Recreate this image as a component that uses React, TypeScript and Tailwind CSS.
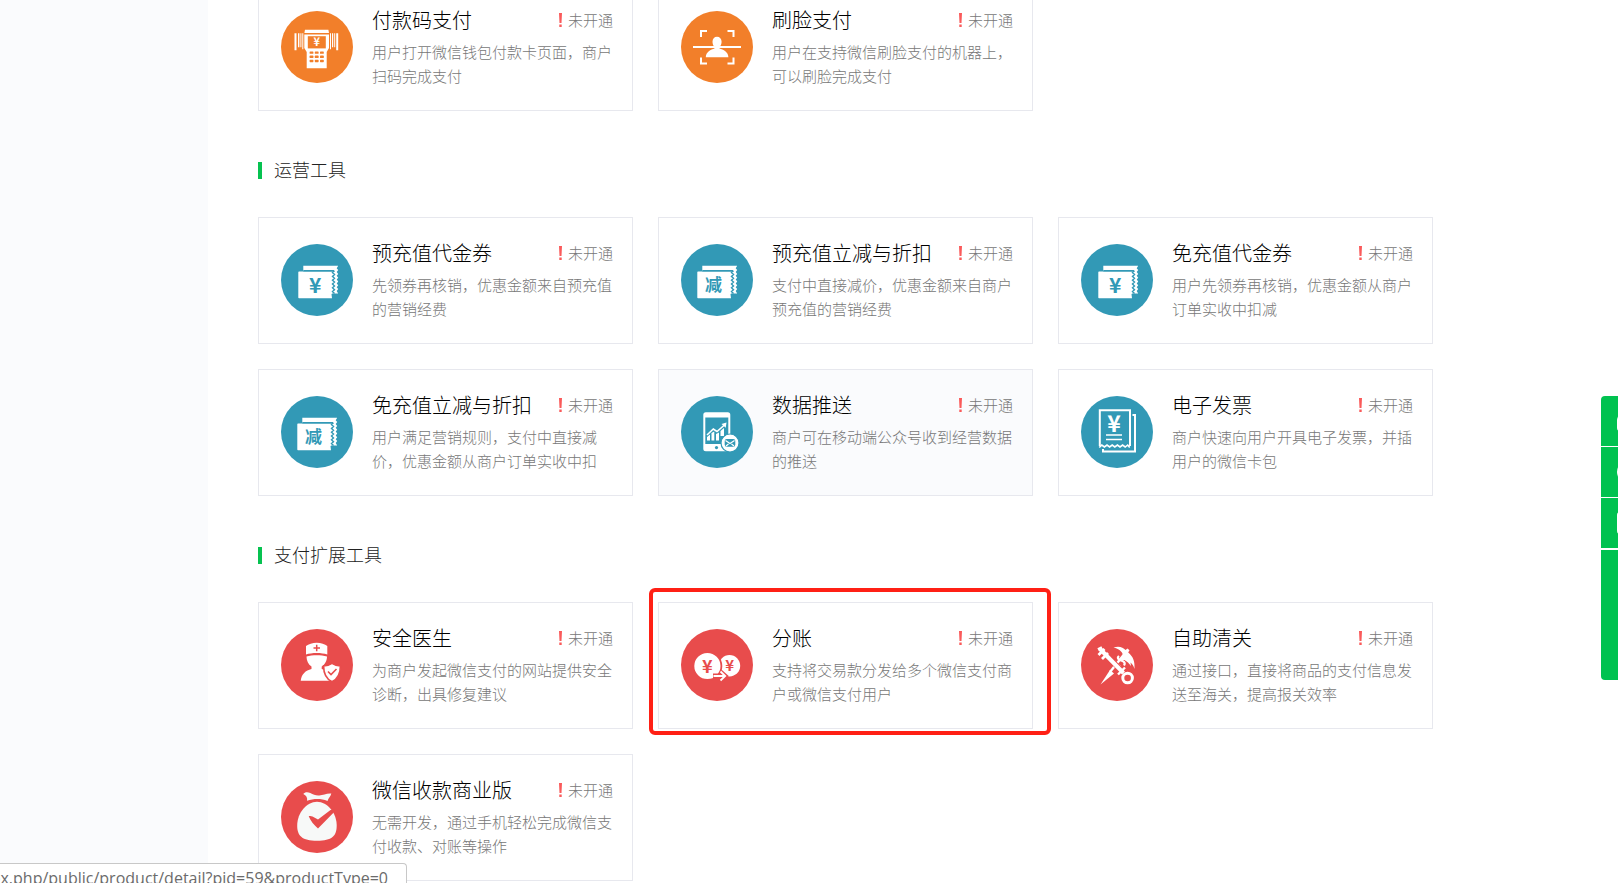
import React from 'react';
import { FiHeadphones, FiHelpCircle, FiFileText } from 'react-icons/fi';

type IconProps = { color: string };

const zigzag = (x: number, top: number, count: number) =>
  `M${x} ${top}` + ' l-2 1.9 l2 1.9'.repeat(count);

const PosIcon: React.FC<IconProps> = ({ color }) => (
  <>
    <g fill="#fff">
      <path d="M24 18.7h23.4l.6 3.3H23.4z" />
      <path d="M23.3 23.4H48V37l-2.3 4v16.2H25.7V41l-2.4-4z" />
      <path d="M13.5 22.3h2v17h-2zM17 22.3h1.4v14H17zM19.4 22.3h1v14h-1zM21.3 22.3h1v16h-1z" />
      <path d="M49 22.3h1v16h-1zM51 22.3h1.2v14H51zM53.2 22.3h1v14h-1zM55.2 22.3h2v17h-2z" />
    </g>
    <path fill={color} d="M26.8 25.2h18v12.2h-18z" />
    <text x="35.8" y="35.2" textAnchor="middle" fontSize="11" fontWeight="700" fill="#fff">¥</text>
    {[40.4, 44.6, 48.8].map((y) =>
      [28.6, 33.8, 39].map((x) => <rect key={`${x}-${y}`} x={x} y={y} width="3.8" height="2.4" rx=".6" fill={color} />)
    )}
  </>
);

const FaceIcon: React.FC<IconProps> = () => (
  <>
    <path
      fill="none"
      stroke="#fff"
      strokeWidth="2"
      d="M20 26v-6h6M46.5 20h6v6M20 46.5v6h6M46.5 52.5h6v-6M12 36h48"
    />
    <path fill="#fff" d="M36 25.8c-2.8 0-4.5 2-4.5 5 0 2.2.8 4.2 2 5.3v1.5c-3.5 1-8.7 3.6-8.7 8.7h22.6c0-5.1-5.2-7.7-8.9-8.7v-1.5c1.3-1.1 2.1-3.1 2.1-5.3 0-3-1.8-5-4.6-5z" />
  </>
);

const Coupon: React.FC<IconProps & { children: React.ReactNode }> = ({ color, children }) => (
  <>
    <path fill="#fff" d="M22.3 21.7h34.9l-1.5 2.5 1.5 1.9-1.5 1.9 1.5 1.9-1.5 1.9 1.5 1.9-1.5 1.9 1.5 1.9-1.5 1.9 1.5 1.9-1.5 1.9 1.5 1.9-1.5 1.9 1.5 2.5h-6V27H22.3z" />
    <path fill="#fff" d="M18 27.5h34v21l-1.5 1.8.5 4H18a.7.7 0 0 1-.7-.7V28.2a.7.7 0 0 1 .7-.7z" />
    <path fill="none" stroke={color} strokeWidth="1.4" d={`M22.3 26.7H53 ${zigzag(53.5, 26.7, 6)}`} />
    {children}
  </>
);

const YuanCouponIcon: React.FC<IconProps> = ({ color }) => (
  <Coupon color={color}>
    <text x="34.3" y="48.5" textAnchor="middle" fontSize="21" fontWeight="700" fill={color}>¥</text>
  </Coupon>
);

const DiscountCouponIcon: React.FC<IconProps> = ({ color }) => (
  <g transform="translate(-1 0)">
    <Coupon color={color}>
      <text x="33.5" y="47" textAnchor="middle" fontSize="17" fontWeight="700" fill={color}>减</text>
    </Coupon>
  </g>
);

const DataPushIcon: React.FC<IconProps> = ({ color }) => (
  <>
    <rect x="22.3" y="16.3" width="27" height="39" rx="2.5" fill="#fff" />
    <path fill={color} d="M24.3 21.5h23V48h-23z" />
    <circle cx="35.5" cy="51.6" r="1.6" fill={color} />
    <path fill="none" stroke="#fff" strokeWidth="1.6" d="M26 39l6.3-6 3.7 2.5 8-7" />
    <path fill="#fff" d="M40.5 28l5-1.5-.8 5.2z" />
    <path fill="#fff" d="M26 41l3-2.5v6h-3zM30.5 37l2.8-1.5v9h-2.8zM35 38l3-1.5v8h-3zM39.5 35l3.5-3v8h-3.5z" />
    <circle cx="49" cy="47" r="9" fill="#fff" stroke={color} strokeWidth="1.2" />
    <rect x="43.7" y="43" width="10.6" height="7.8" rx="2" fill={color} />
    <path fill="none" stroke="#fff" strokeWidth="1.2" d="M44.5 44.5l4.5 3 4.5-3M45 50l2.5-2M53 50l-2.5-2" />
  </>
);

const InvoiceIcon: React.FC<IconProps> = () => (
  <g fill="none" stroke="#fff" strokeWidth="2">
    <path d="M18.8 50V14.2H49V50" />
    <path strokeWidth="1.6" d="M18.3 51.5l2.5-2.5 2.6 2 2.6-2 2.6 2 2.6-2 2.6 2 2.6-2 2.6 2 2.6-2 2.6 2 2.5-2 2 2.5" />
    <path d="M51.5 19H54v36.5H22V53" />
    <path d="M25 39h16M25 43.5h16" strokeWidth="1.6" />
    <text x="33" y="36" textAnchor="middle" fontSize="23" fontWeight="700" fill="#fff" stroke="none">¥</text>
  </g>
);

const DoctorIcon: React.FC<IconProps> = ({ color }) => (
  <>
    <path fill="#fff" d="M25 17c2.5-2 6.500-3.300 10.700-3.300S44 15 46.300 17v8.500c-3-1-6.500-1.500-10.600-1.500S28 24.500 25 25.500z" />
    <path fill="#fff" d="M25.5 27.5c3-.8 6.500-1.200 10.200-1.200s7.200.4 10.300 1.200c0 4-2 8-5.300 10v2.500c6 1.500 9.300 5 10.300 11.800H19.700C20.500 45 24.500 41.500 30.500 40v-2.500c-3.200-2-5-6-5-10z" />
    <path stroke={color} strokeWidth="1.5" d="M32.5 19H39M35.700 15.800v6.500" />
    <path fill="#fff" stroke={color} strokeWidth="1.6" d="M51 34.4c2.500 1.600 5.200 2.400 8.400 2.500 0 7.500-2.400 12.800-8.400 15.800-6-3-8.400-8.300-8.400-15.800 3.200-.1 5.900-.9 8.400-2.500z" />
    <path fill="none" stroke={color} strokeWidth="1.6" d="M47 42.5l3 3 5.500-5.500" />
  </>
);

const SplitIcon: React.FC<IconProps> = ({ color }) => (
  <>
    <circle cx="48.5" cy="36.7" r="10.7" fill="#fff" />
    <circle cx="26.4" cy="37" r="14" fill="#fff" stroke={color} strokeWidth="1.8" />
    <text x="26.4" y="43.5" textAnchor="middle" fontSize="18" fontWeight="700" fill={color}>¥</text>
    <text x="48.7" y="42" textAnchor="middle" fontSize="15" fontWeight="700" fill={color}>¥</text>
    <path fill="none" stroke={color} strokeWidth="5" d="M32 47h11M39 42.5l5 4.5-5 4.5" />
    <path fill="none" stroke="#fff" strokeWidth="1.8" d="M32.5 47H44M39.5 42.5l4.7 4.5-4.7 4.5" />
  </>
);

const CustomsIcon: React.FC<IconProps> = ({ color }) => (
  <>
    <path fill="#fff" d="M19.5 55.5L29 41l4 3.5z" />
    <path fill="none" stroke="#fff" strokeWidth="2.4" d="M29 43l16-20" />
    <path fill="#fff" d="M32.5 18.5c6-1.800 9.500 0 12 2.500l2-1.500 2 1.800-1.300 2.200c4.800 4 6.800 8.500 6.300 16.500-1-3.200-2.200-5-4-6.500l.5 3.500-3-3.500-3.500-2.500-4.500 1 3-5c0-3-2-6.500-9.500-8.500z" />
    <path fill="none" stroke="#fff" strokeWidth="2.2" d="M38 27c-2.500 2 0 4 2 4.500s5 2 3 5M34.500 32c-2.500 2 0 3.500 2 4s4 2 2 4.500" />
    <path stroke={color} strokeWidth="5.5" d="M26 27l15 15" />
    <path stroke="#fff" strokeWidth="4" d="M19 20l23.500 24" />
    <path fill="none" stroke="#fff" strokeWidth="2.8" d="M21 30l6-6M17.500 26l6-6M17 20.500l4-2" />
    <circle cx="46.6" cy="49" r="4.8" fill="none" stroke="#fff" strokeWidth="3" />
    <path stroke="#fff" strokeWidth="2.4" d="M37 45.500l7-7" />
  </>
);

const MoneyBagIcon: React.FC<IconProps> = ({ color }) => (
  <>
    <path fill="#f7f9f8" d="M22.3 13c1.500-2.200 4.500-2.200 7-1 3 1.500 5.500 2.700 9 2.400 4-.3 7.500-2.400 12-1.900-.5 3-3 4.500-3.800 7.500-6.500-2.500-13.500-2.500-20.500-.2.800-3-.8-5.300-3.700-6.800z" />
    <path fill="#f7f9f8" d="M36 20.7c10.500 0 19.700 11.300 19.700 23.800 0 10.500-4.700 15.200-19.700 15.200S16.200 55 16.200 44.500C16.200 32 25.500 20.700 36 20.700z" />
    <path fill={color} d="M27.7 35.3c1.300-.6 2.500-.3 3.800.3l5.500 2.900L49.500 29l3.800-.6-.6 3-15.700 16c-4-3.200-7.200-7.200-9.300-12.100z" />
  </>
);

const ORANGE = '#f27f2a';
const TEAL = '#3299b6';
const RED = '#e84c4c';

type Product = {
  title: string;
  desc: string;
  icon: React.FC<IconProps>;
  hovered?: boolean;
  marked?: boolean;
};

const payments: Product[] = [
  { title: '付款码支付', desc: '用户打开微信钱包付款卡页面，商户扫码完成支付', icon: PosIcon },
  { title: '刷脸支付', desc: '用户在支持微信刷脸支付的机器上，可以刷脸完成支付', icon: FaceIcon },
];

const operations: Product[] = [
  { title: '预充值代金券', desc: '先领券再核销，优惠金额来自预充值的营销经费', icon: YuanCouponIcon },
  { title: '预充值立减与折扣', desc: '支付中直接减价，优惠金额来自商户预充值的营销经费', icon: DiscountCouponIcon },
  { title: '免充值代金券', desc: '用户先领券再核销，优惠金额从商户订单实收中扣减', icon: YuanCouponIcon },
  { title: '免充值立减与折扣', desc: '用户满足营销规则，支付中直接减价，优惠金额从商户订单实收中扣', icon: DiscountCouponIcon },
  { title: '数据推送', desc: '商户可在移动端公众号收到经营数据的推送', icon: DataPushIcon, hovered: true },
  { title: '电子发票', desc: '商户快速向用户开具电子发票，并插用户的微信卡包', icon: InvoiceIcon },
];

const extensions: Product[] = [
  { title: '安全医生', desc: '为商户发起微信支付的网站提供安全诊断，出具修复建议', icon: DoctorIcon },
  { title: '分账', desc: '支持将交易款分发给多个微信支付商户或微信支付用户', icon: SplitIcon, marked: true },
  { title: '自助清关', desc: '通过接口，直接将商品的支付信息发送至海关，提高报关效率', icon: CustomsIcon },
  { title: '微信收款商业版', desc: '无需开发，通过手机轻松完成微信支付收款、对账等操作', icon: MoneyBagIcon },
];

const ProductCard: React.FC<{ product: Product; color: string }> = ({ product, color }) => {
  const Icon = product.icon;
  return (
    <a
      href="#"
      className={`relative flex items-start border border-[#e7e8ee] pt-5 pb-[22px] pl-[22px] pr-[19px] ${
        product.hovered ? 'bg-[#fafbfd]' : 'bg-white'
      }`}
    >
      <svg viewBox="0 0 72 72" className="mt-1.5 mr-[19px] h-[72px] w-[72px] shrink-0" aria-hidden="true">
        <circle cx="36" cy="36" r="36" fill={color} />
        <Icon color={color} />
      </svg>
      <div className="min-w-0 flex-1">
        <div className="flex items-center justify-between">
          <h3 className="text-xl leading-[30px] text-black">{product.title}</h3>
          <span className="flex items-center gap-1.5 text-[15px] leading-[30px] text-[#777]">
            <svg viewBox="0 0 3 14" className="h-3.5 w-[3px]" fill="#fa5a5a" aria-hidden="true">
              <path d="M0 0h3l-.5 10h-2zM.3 11.5h2.4V14H.3z" />
            </svg>
            未开通
          </span>
        </div>
        <p className="mt-[5px] text-[15px] leading-6 text-[#777]">{product.desc}</p>
      </div>
      {product.marked && (
        <span className="pointer-events-none absolute -top-[15px] -right-[19px] -bottom-[7px] -left-[10px] z-10 rounded-md border-4 border-[#ff2015]" />
      )}
    </a>
  );
};

const ProductGrid: React.FC<{ items: Product[]; color: string }> = ({ items, color }) => (
  <div className="grid grid-cols-3 gap-[25px]">
    {items.map((item) => (
      <ProductCard key={item.title} product={item} color={color} />
    ))}
  </div>
);

const SectionTitle: React.FC<{ children: React.ReactNode }> = ({ children }) => (
  <div className="flex h-[106px] items-center gap-3">
    <span className="mt-3 h-[17px] w-1 bg-[#06c250]" />
    <h2 className="mt-2.5 text-lg leading-6 text-[#222]">{children}</h2>
  </div>
);

const SideTools: React.FC = () => (
  <div className="absolute top-[396px] right-0 z-20 flex w-[17px] flex-col gap-px overflow-hidden rounded-l text-white">
    <button type="button" aria-label="客服" className="flex h-[50px] items-center bg-[#00c250] pl-3.5">
      <FiHeadphones className="size-6 shrink-0" />
    </button>
    <button type="button" aria-label="帮助" className="flex h-[50px] items-center bg-[#00c250] pl-[15px]">
      <FiHelpCircle className="size-6 shrink-0" />
    </button>
    <button type="button" aria-label="文档" className="mb-px flex h-[50px] items-center bg-[#00c250] pl-[13px]">
      <FiFileText className="size-6 shrink-0" />
    </button>
    <button type="button" aria-label="意见反馈" className="h-[130px] bg-[#00c250]" />
  </div>
);

export default function App() {
  return (
    <div className="relative flex h-screen overflow-hidden bg-white font-['Noto_Sans_CJK_SC',sans-serif] font-light">
      <aside className="w-[208px] shrink-0 bg-[#fafbfd]" />
      <main className="-mt-4 ml-[50px] max-w-[1175px] flex-1">
        <ProductGrid items={payments} color={ORANGE} />
        <SectionTitle>运营工具</SectionTitle>
        <ProductGrid items={operations} color={TEAL} />
        <SectionTitle>支付扩展工具</SectionTitle>
        <ProductGrid items={extensions} color={RED} />
      </main>
      <SideTools />
      <div className="absolute -bottom-2 left-0 z-20 flex h-7 w-[407px] justify-end rounded-tr border-t border-r border-[#c8c8c8] bg-white pr-[18px] font-['Open_Sans',sans-serif] text-base leading-7 font-normal whitespace-nowrap text-[#6b6b6b]">
        ex.php/public/product/detail?pid=59&amp;productType=0
      </div>
    </div>
  );
}
